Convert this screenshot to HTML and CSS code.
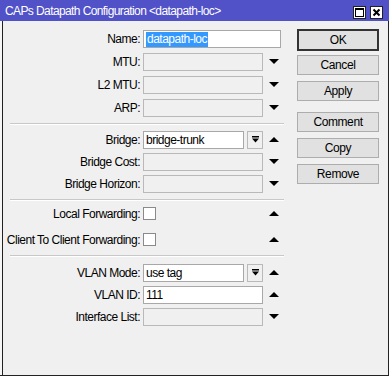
FILE: index.html
```html
<!DOCTYPE html>
<html>
<head>
<meta charset="utf-8">
<link rel="stylesheet" href="styles.css">
</head>
<body>
<div class="window">
  <div class="titlebar">
    <span class="title">CAPs Datapath Configuration &lt;datapath-loc&gt;</span>
    <div class="tb-buttons">
      <span class="tb-btn"><span class="max-box"></span></span>
      <span class="tb-btn close"><svg width="9" height="9" viewBox="0 0 9 9"><path d="M1.5 1.5 L7.5 7.5 M7.5 1.5 L1.5 7.5" stroke="#000" stroke-width="2"/></svg></span>
    </div>
  </div>
  <div class="content">
    <div class="form">
      <div class="group g1">
        <div class="row">
          <label class="lbl">Name:</label>
          <div class="field wide white"><span class="sel">datapath-loc</span></div>
        </div>
        <div class="row">
          <label class="lbl">MTU:</label>
          <div class="field"></div>
          <span class="arrow down"></span>
        </div>
        <div class="row">
          <label class="lbl">L2 MTU:</label>
          <div class="field"></div>
          <span class="arrow down"></span>
        </div>
        <div class="row">
          <label class="lbl">ARP:</label>
          <div class="field"></div>
          <span class="arrow down"></span>
        </div>
      </div>
      <div class="sep"></div>
      <div class="group g2">
        <div class="row">
          <label class="lbl">Bridge:</label>
          <div class="field short white">bridge-trunk</div>
          <span class="dd"><svg width="9" height="9" viewBox="0 0 9 9"><rect x="1" y="1" width="7" height="1.5" fill="#000"/><path d="M1 3.5 H8 L4.5 7.5 Z" fill="#000"/></svg></span>
          <span class="arrow up"></span>
        </div>
        <div class="row">
          <label class="lbl">Bridge Cost:</label>
          <div class="field"></div>
          <span class="arrow down"></span>
        </div>
        <div class="row">
          <label class="lbl">Bridge Horizon:</label>
          <div class="field"></div>
          <span class="arrow down"></span>
        </div>
      </div>
      <div class="sep"></div>
      <div class="group g3">
        <div class="row tall">
          <label class="lbl">Local Forwarding:</label>
          <div class="checkcell"><span class="check"></span></div>
          <span class="arrow up"></span>
        </div>
        <div class="row tall">
          <label class="lbl">Client To Client Forwarding:</label>
          <div class="checkcell"><span class="check"></span></div>
          <span class="arrow up"></span>
        </div>
      </div>
      <div class="sep"></div>
      <div class="group g4">
        <div class="row">
          <label class="lbl">VLAN Mode:</label>
          <div class="field short white">use tag</div>
          <span class="dd"><svg width="9" height="9" viewBox="0 0 9 9"><rect x="1" y="1" width="7" height="1.5" fill="#000"/><path d="M1 3.5 H8 L4.5 7.5 Z" fill="#000"/></svg></span>
          <span class="arrow up"></span>
        </div>
        <div class="row">
          <label class="lbl">VLAN ID:</label>
          <div class="field white">111</div>
          <span class="arrow up"></span>
        </div>
        <div class="row">
          <label class="lbl">Interface List:</label>
          <div class="field"></div>
          <span class="arrow down"></span>
        </div>
      </div>
    </div>
    <div class="buttons">
      <button class="btn default">OK</button>
      <button class="btn">Cancel</button>
      <button class="btn">Apply</button>
      <button class="btn gap">Comment</button>
      <button class="btn">Copy</button>
      <button class="btn">Remove</button>
    </div>
  </div>
</div>
</body>
</html>
```
FILE: styles.css
```css
html, body {
  margin: 0;
  padding: 0;
  background: #ffffff;
}
body {
  font-family: "Liberation Sans", Arial, sans-serif;
  font-size: 12px;
  letter-spacing: -0.5px;
  color: #000;
}
.window {
  width: 389px;
  height: 376px;
  box-sizing: border-box;
  border-right: 1px solid #222;
  border-bottom: 1px solid #222;
  background: #f0f0f0;
  display: flex;
  flex-direction: column;
}
.titlebar {
  height: 21px;
  background: #5151c8;
  display: flex;
  align-items: center;
  justify-content: space-between;
  padding: 0 6px 0 5px;
  margin-right: -1px;
  flex: none;
}
.title {
  color: #fff;
  font-size: 12px;
  letter-spacing: -0.6px;
}
.tb-buttons {
  display: flex;
  gap: 4px;
  margin-top: 3px;
}
.tb-btn {
  width: 13px;
  height: 13px;
  box-sizing: border-box;
  background: #fff;
  border: 1px solid #222;
  display: flex;
  align-items: center;
  justify-content: center;
}
.max-box {
  width: 9px;
  height: 9px;
  border: 1px solid #000;
  border-top-width: 2px;
  box-sizing: border-box;
}
.content {
  display: flex;
  padding-top: 8px;
  border-left: 2px solid #f6f6f6;
  box-shadow: inset 1px 0 0 #222;
  flex: 1;
}
.form {
  width: 282px;
  display: flex;
  flex-direction: column;
}
.group {
  display: flex;
  flex-direction: column;
}
.g1 { gap: 4px; }
.g2 { gap: 3px; margin-top: 6px; }
.g3 { gap: 1px; margin-top: 1px; }
.g4 { gap: 3px; margin-top: 7px; }
.row {
  display: flex;
  align-items: center;
  height: 19px;
}
.row.tall {
  height: 25px;
}
.lbl {
  width: 141px;
  text-align: right;
  padding-right: 3px;
  box-sizing: border-box;
  flex: none;
  white-space: nowrap;
}
.field {
  width: 120px;
  height: 18px;
  box-sizing: border-box;
  border: 1px solid #b9b9b9;
  background: #f0f0f0;
  padding: 0 2px;
  line-height: 16px;
  flex: none;
  font-size: 12px;
}
.field.white {
  background: #fff;
  border-color: #a8a8a8;
}
.field.wide {
  width: 138px;
  padding-left: 2px;
}
.field.short {
  width: 101px;
}
.sel {
  background: #3399ff;
  color: #fff;
  padding: 0 1px 1px 1px;
}
.dd {
  width: 16px;
  height: 18px;
  box-sizing: border-box;
  border: 1px solid #b9b9b9;
  background: #f0f0f0;
  margin-left: 3px;
  display: flex;
  align-items: center;
  justify-content: center;
  flex: none;
}
.arrow {
  width: 20px;
  display: flex;
  justify-content: center;
  margin-left: 1px;
  flex: none;
}
.arrow::after {
  content: "";
  border-left: 5px solid transparent;
  border-right: 5px solid transparent;
}
.arrow.down::after {
  border-top: 5px solid #000;
}
.arrow.up::after {
  border-bottom: 5px solid #000;
}
.checkcell {
  width: 120px;
  flex: none;
  display: flex;
  align-items: center;
}
.check {
  width: 13px;
  height: 13px;
  box-sizing: border-box;
  border: 1px solid #8a8a8a;
  background: #fff;
}
.sep {
  height: 1px;
  background: #c8c8c8;
  margin: 6px 0 0 8px;
  box-shadow: 0 1px 0 #fff;
  flex: none;
}
.g3 + .sep {
  margin-top: 3px;
}
.buttons {
  display: flex;
  flex-direction: column;
  gap: 6px;
  padding-left: 13px;
}
.btn {
  width: 82px;
  height: 20px;
  box-sizing: border-box;
  border: 1px solid #adadad;
  background: #e1e1e1;
  font-family: "Liberation Sans", Arial, sans-serif;
  font-size: 12px;
  letter-spacing: -0.4px;
  color: #000;
  padding: 0;
}
.btn.default {
  height: 22px;
  border: 2px solid #333;
  margin-bottom: -2px;
}
.btn.gap {
  margin-top: 5px;
}
```
